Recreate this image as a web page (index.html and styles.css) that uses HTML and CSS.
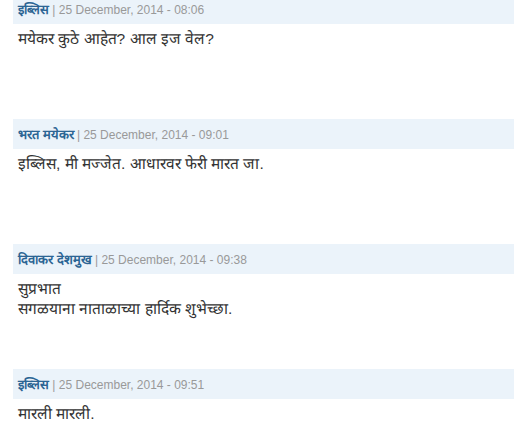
FILE: index.html
```html
<!DOCTYPE html>
<html>
<head>
<meta charset="utf-8">
<link rel="stylesheet" href="styles.css">
</head>
<body>
<div class="comments">
  <div class="comment">
    <div class="meta"><span class="author">इब्लिस</span> | 25 December, 2014 - 08:06</div>
    <div class="body"><p>मयेकर कुठे आहेत? आल इज वेल?</p></div>
  </div>
  <div class="comment">
    <div class="meta"><span class="author">भरत मयेकर</span> | 25 December, 2014 - 09:01</div>
    <div class="body"><p>इब्लिस, मी मज्जेत. आधारवर फेरी मारत जा.</p></div>
  </div>
  <div class="comment">
    <div class="meta"><span class="author">दिवाकर देशमुख</span> | 25 December, 2014 - 09:38</div>
    <div class="body"><p>सुप्रभात<br>सगळयाना नाताळाच्या हार्दिक शुभेच्छा.</p></div>
  </div>
  <div class="comment">
    <div class="meta"><span class="author">इब्लिस</span> | 25 December, 2014 - 09:51</div>
    <div class="body"><p>मारली मारली.</p></div>
  </div>
</div>
</body>
</html>
```
FILE: styles.css
```css
html, body {
  margin: 0;
  padding: 0;
  background: #fff;
}
body {
  font-family: "Liberation Sans", Arial, sans-serif;
  overflow: hidden;
}
.comments {
  margin-top: -6px;
  padding-left: 13px;
}
.comment {
  height: 125px;
}
.comment:last-child {
  height: auto;
}
.meta {
  background: #ebf3fa;
  height: 30px;
  line-height: 31px;
  padding: 0 5px;
  font-size: 12px;
  color: #999;
}
.author {
  color: #2b6594;
  font-weight: bold;
  font-size: 13px;
}
.body {
  padding: 5px 5px 0;
  font-size: 15.5px;
  line-height: 20px;
  color: #333;
}
.body p {
  margin: 0;
}
```
